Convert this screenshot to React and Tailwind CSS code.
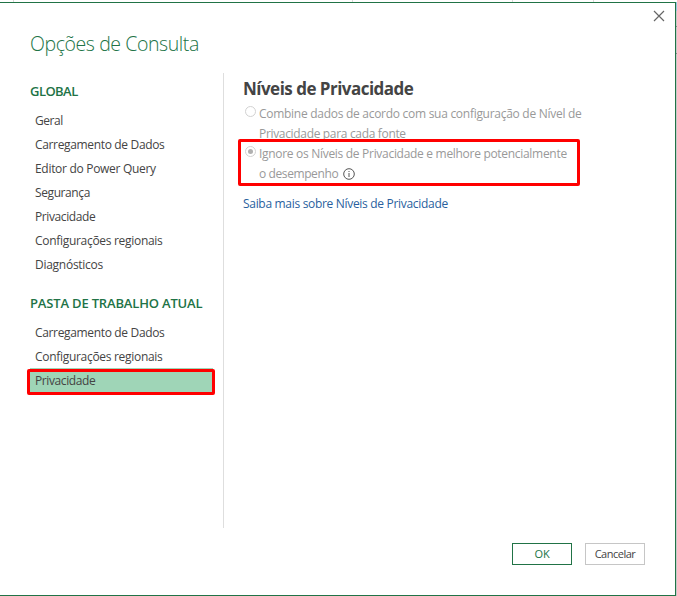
const globalItems = [
  ['Geral', 'tracking-[-0.45px]'],
  ['Carregamento de Dados', 'tracking-[-0.34px]'],
  ['Editor do Power Query', 'tracking-[-0.3px]'],
  ['Segurança', 'tracking-[-0.4px]'],
  ['Privacidade', 'tracking-[-0.4px]'],
  ['Configurações regionais', 'tracking-[-0.3px]'],
  ['Diagnósticos', 'tracking-[-0.27px]'],
];

const workbookItems = [
  ['Carregamento de Dados', 'tracking-[-0.34px]'],
  ['Configurações regionais', 'tracking-[-0.3px]'],
];

function NavItem({ label, tracking }) {
  return <li className={`flex h-6 items-center pl-[5px] pt-[2px] ${tracking}`}>{label}</li>;
}

function Radio({ checked }) {
  return (
    <span className="mt-[2px] flex size-[11px] shrink-0 items-center justify-center rounded-full border border-[#d2d2d2] bg-white">
      {checked && <span className="size-[5px] rounded-full bg-[#b0b0b0]" />}
    </span>
  );
}

export default function App() {
  return (
    <div className="flex h-[596px] w-[677px] flex-col overflow-hidden bg-white font-['Open_Sans','Noto_Sans',sans-serif] text-[12px] text-[#444444]">
      <div className="flex h-[2px] shrink-0">
        <span className="w-[14px] border-r border-[#d9d9d9]" />
        <span className="w-[339px] border-r border-[#d9d9d9]" />
        <span className="w-[160px] border-r border-[#d9d9d9]" />
        <span className="w-[81px] border-r border-[#d9d9d9]" />
      </div>
      <div className="flex min-h-0 flex-1">
        <div className="flex w-[676px] shrink-0 flex-col border-y border-r border-[#217346] bg-white">
          <header className="flex h-[70px] shrink-0 justify-between pl-[30px] pr-[10px]">
            <h1 className="mt-[25px] text-[19.5px] font-light leading-8 tracking-[-0.42px] text-[#217346]">Opções de Consulta</h1>
            <svg className="mt-[7px]" width="12" height="12" viewBox="0 0 12 12" fill="none" stroke="#666" strokeWidth="1.2">
              <path d="M1 1l10 10M11 1L1 11" />
            </svg>
          </header>

          <div className="flex h-[455px] shrink-0">
            <nav className="w-[224px] border-r border-[#dedede] pl-[30px]">
              <h2 className="mt-[6px] h-[24px] text-[13px] font-semibold leading-6 tracking-[-0.55px] text-[#217346]">GLOBAL</h2>
              <ul className="mt-[5px]">
                {globalItems.map(([label, tracking]) => (
                  <NavItem key={label} label={label} tracking={tracking} />
                ))}
              </ul>
              <h2 className="mt-[15px] h-6 whitespace-nowrap text-[13px] font-semibold leading-6 tracking-[-0.17px] text-[#217346]">PASTA DE TRABALHO ATUAL</h2>
              <ul className="mt-[5px]">
                {workbookItems.map(([label, tracking]) => (
                  <NavItem key={label} label={label} tracking={tracking} />
                ))}
                <li className="relative flex h-6 w-[183px] items-center bg-[#9fd5b7] pl-[5px] pt-[2px] tracking-[-0.4px]">
                  Privacidade
                  <span className="absolute -left-[3px] top-[1px] h-[26px] w-[188px] rounded-[2px] border-3 border-[#ff0000]" />
                </li>
              </ul>
            </nav>

            <main className="flex-1 pl-[19px]">
              <h2 className="mt-[2px] text-[17px] font-bold leading-7 tracking-[-0.52px]">Níveis de Privacidade</h2>
              <div className="mt-[1px] flex gap-[3px] pl-[2px] leading-5 text-[#999999]">
                <Radio />
                <p className="whitespace-nowrap">
                  <span className="block tracking-[-0.28px]">Combine dados de acordo com sua configuração de Nível de</span>
                  <span className="block tracking-[-0.33px]">Privacidade para cada fonte</span>
                </p>
              </div>
              <div className="relative flex gap-[3px] pl-[2px] leading-5 text-[#999999]">
                <Radio checked />
                <div className="whitespace-nowrap">
                  <p className="tracking-[-0.3px]">Ignore os Níveis de Privacidade e melhore potencialmente</p>
                  <p className="flex items-center gap-[5px] tracking-[-0.4px]">
                    o desempenho
                    <svg width="12" height="12" viewBox="0 0 12 12" fill="none" stroke="#555" strokeWidth="1">
                      <circle cx="6" cy="6" r="5.3" />
                      <path d="M6 5v4M6 3v1" />
                    </svg>
                  </p>
                </div>
                <span className="absolute -left-[5px] -top-[5px] h-[47px] w-[342px] rounded-[2px] border-3 border-[#ff0000]" />
              </div>
              <a className="mt-[10px] block leading-5 tracking-[-0.31px] text-[#2a5f9e]">Saiba mais sobre Níveis de Privacidade</a>
            </main>
          </div>

          <footer className="flex justify-end gap-[13px] pr-[30px] pt-[15px] text-[11px]">
            <button className="h-[22px] w-[60px] border border-[#217346] leading-5 tracking-[-0.2px] text-[#217346]">OK</button>
            <button className="h-[22px] w-[60px] border border-[#c6c6c6] leading-5 tracking-[-0.5px]">Cancelar</button>
          </footer>
        </div>
        <div className="flex w-px flex-col bg-[#c8c8c8]">
          <span className="h-[9px] bg-[#9bc7e3]" />
          <span className="mt-[15px] h-px bg-[#888888]" />
          <span className="mt-[26px] h-px bg-[#888888]" />
        </div>
      </div>
    </div>
  );
}
